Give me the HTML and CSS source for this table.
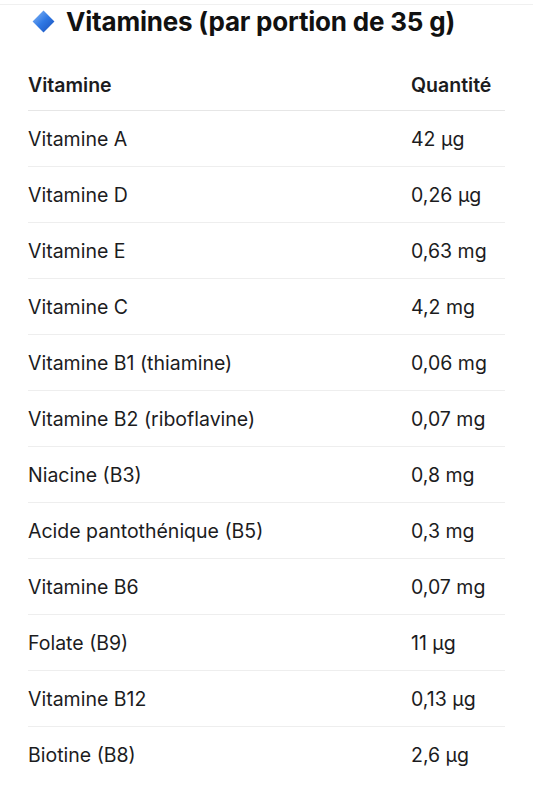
FILE: index.html
```html
<!DOCTYPE html>
<html lang="fr">
<head>
<meta charset="utf-8">
<link rel="stylesheet" href="styles.css">
</head>
<body>
<div class="topline"></div>
<h2 class="title">
  <svg class="diamond" viewBox="0 0 24 24" width="25" height="25" aria-hidden="true">
    <defs>
      <linearGradient id="g" x1="0" y1="0" x2="1" y2="1">
        <stop offset="0" stop-color="#8cbcf7"/>
        <stop offset="0.5" stop-color="#2f78e4"/>
        <stop offset="1" stop-color="#1a4fb8"/>
      </linearGradient>
    </defs>
    <path d="M12 1.5 L22.5 12 L12 22.5 L1.5 12 Z" fill="url(#g)"/>
  </svg>
  <span>Vitamines (par portion de 35 g)</span>
</h2>
<table class="tbl">
  <thead>
    <tr><th>Vitamine</th><th>Quantité</th></tr>
  </thead>
  <tbody>
    <tr><td>Vitamine A</td><td>42 µg</td></tr>
    <tr><td>Vitamine D</td><td>0,26 µg</td></tr>
    <tr><td>Vitamine E</td><td>0,63 mg</td></tr>
    <tr><td>Vitamine C</td><td>4,2 mg</td></tr>
    <tr><td>Vitamine B1 (thiamine)</td><td>0,06 mg</td></tr>
    <tr><td>Vitamine B2 (riboflavine)</td><td>0,07 mg</td></tr>
    <tr><td>Niacine (B3)</td><td>0,8 mg</td></tr>
    <tr><td>Acide pantothénique (B5)</td><td>0,3 mg</td></tr>
    <tr><td>Vitamine B6</td><td>0,07 mg</td></tr>
    <tr><td>Folate (B9)</td><td>11 µg</td></tr>
    <tr><td>Vitamine B12</td><td>0,13 µg</td></tr>
    <tr><td>Biotine (B8)</td><td>2,6 µg</td></tr>
  </tbody>
</table>
</body>
</html>
```

FILE: styles.css
```css
html, body {
  margin: 0;
  padding: 0;
  background: #ffffff;
}
body {
  font-family: Inter, "Noto Sans", "Liberation Sans", sans-serif;
  color: #1c1c1e;
  overflow: hidden;
}
.topline {
  height: 1px;
  background: #f0f0f0;
  margin-top: 4px;
}
.title {
  display: flex;
  align-items: center;
  gap: 10px;
  margin: 0;
  padding: 0 0 0 31px;
  height: 32px;
  font-size: 26px;
  font-weight: 700;
  letter-spacing: -0.2px;
  color: #111111;
}
.diamond {
  flex: none;
}
.tbl {
  margin: 23px 28px 0 28px;
  width: 477px;
  border-collapse: collapse;
  font-size: 19.5px;
}
.tbl th {
  text-align: left;
  font-weight: 600;
  height: 50px;
  padding: 0;
  vertical-align: middle;
  border-bottom: 1px solid #e6e6e6;
}
.tbl td {
  height: 55px;
  padding: 0;
  vertical-align: middle;
  border-bottom: 1px solid #eeeeee;
}
.tbl tbody tr:last-child td {
  border-bottom: none;
}
.tbl th:first-child, .tbl td:first-child {
  width: 383px;
}
```
